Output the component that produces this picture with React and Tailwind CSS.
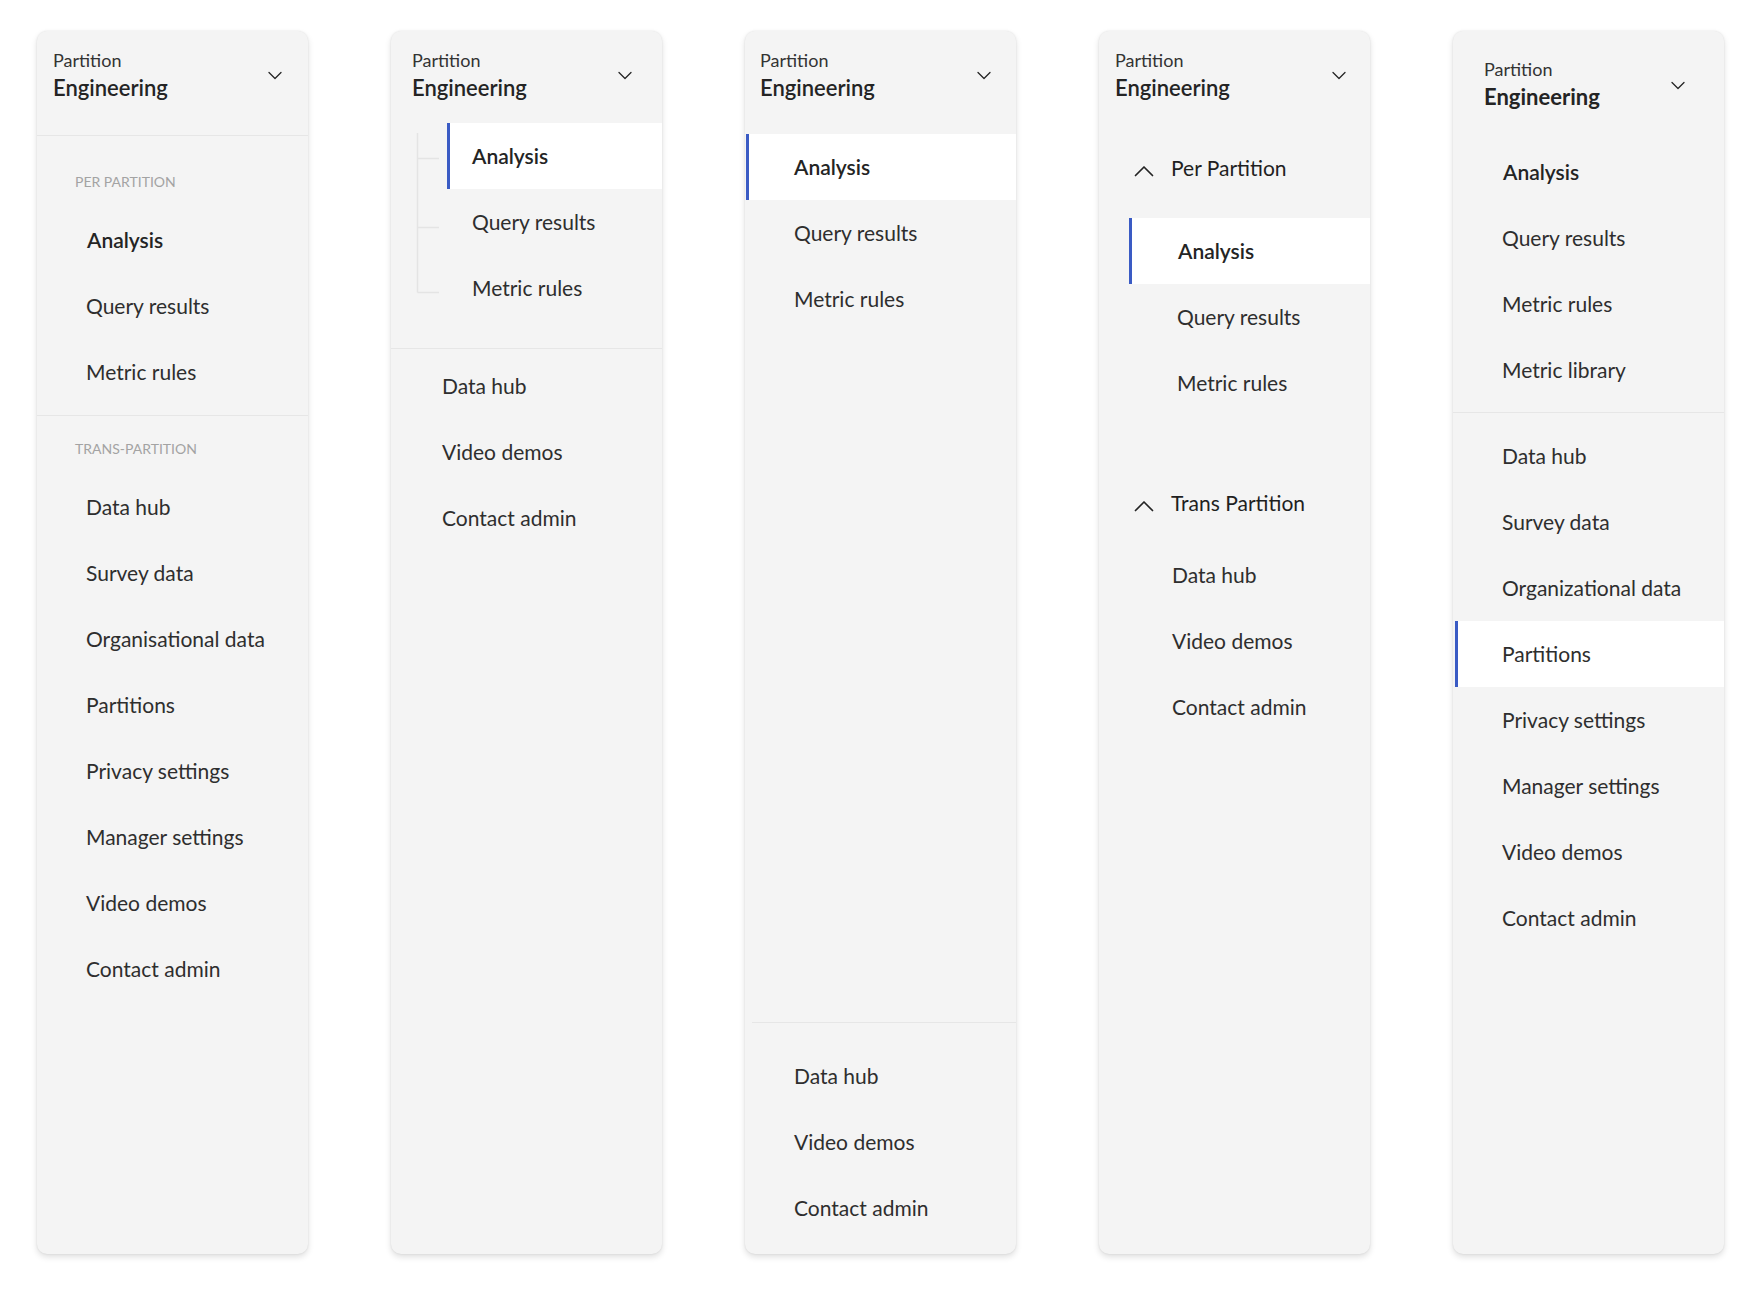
import React from "react";
import clsx from "clsx";

// chevron used in the partition picker
const ChevronDown = () => (
  <svg className="h-[16px] w-[16px]" viewBox="0 0 16 16" fill="none">
    <path d="M2 5.5L8 11.5L14 5.5" stroke="#242424" strokeWidth="1.3" strokeLinecap="round" strokeLinejoin="round" />
  </svg>
);

const ChevronUp = () => (
  <svg className="h-[12px] w-[20px]" viewBox="0 0 20 12" fill="none">
    <path d="M1.5 10.5L10 2L18.5 10.5" stroke="#242424" strokeWidth="1.7" strokeLinecap="round" strokeLinejoin="round" />
  </svg>
);

const Panel = ({ children }) => (
  <div className="flex h-[1223px] w-[271px] shrink-0 flex-col overflow-hidden rounded-[10px] bg-[#f4f4f4] shadow-[0_3px_6px_rgba(0,0,0,0.13),0_0_2px_rgba(0,0,0,0.1)]">
    {children}
  </div>
);

// header with "Partition / Engineering" and the dropdown chevron
const Header = ({ className, textClass, chevronClass, heavy }) => (
  <div className={clsx("flex shrink-0 justify-between", className)}>
    <div className={textClass}>
      <div className="text-[18px] leading-[22px] text-[#333333]">Partition</div>
      <div className={clsx("mt-[3px] text-[22px] leading-[28px] text-[#242424]", heavy ? "font-bold" : "font-semibold")}>
        Engineering
      </div>
    </div>
    <div className={chevronClass}>
      <ChevronDown />
    </div>
  </div>
);

const Row = ({ label, className, selected, bold }) => (
  <div
    className={clsx(
      "flex h-[66px] items-center text-[21px]",
      bold ? "font-semibold text-[#242424]" : "text-[#2e2e2e]",
      selected && "border-l-[3px] border-[#3a5bc4] bg-white",
      className
    )}
  >
    {label}
  </div>
);

const Label = ({ children, className }) => (
  <div className={clsx("pl-[38px] text-[14px] leading-[20px] text-[#a3a3a3]", className)}>{children}</div>
);

const Divider = ({ className }) => <div className={clsx("h-[1px] shrink-0 bg-[#e6e6e6]", className)} />;

const PanelOne = () => (
  <Panel>
    <Header className="h-[104px] pl-[16px] pr-[25px]" textClass="pt-[18px]" chevronClass="pt-[36px]" />
    <Divider />
    <Label className="mt-[36px]">PER PARTITION</Label>
    <div className="mt-[15px]">
      <Row label="Analysis" bold className="pl-[50px]" />
      <Row label="Query results" className="pl-[49px]" />
      <Row label="Metric rules" className="pl-[49px]" />
    </div>
    <Divider className="mt-[10px]" />
    <Label className="mt-[23px]">TRANS-PARTITION</Label>
    <div className="mt-[15px]">
      {["Data hub", "Survey data", "Organisational data", "Partitions", "Privacy settings", "Manager settings", "Video demos", "Contact admin"].map((item) => (
        <Row key={item} label={item} className="pl-[49px]" />
      ))}
    </div>
  </Panel>
);

const PanelTwo = () => (
  <Panel>
    <Header className="h-[92px] pl-[21px] pr-[29px]" textClass="pt-[18px]" chevronClass="pt-[36px]" />
    <div className="flex">
      {/* tree connector */}
      <svg className="h-[198px] w-[56px] shrink-0" viewBox="0 0 56 198" fill="none">
        <path d="M26.5 10V169.5M26.5 35.5H48M26.5 104.5H48M26.5 169.5H48" stroke="#e4e4e4" strokeWidth="1.5" />
      </svg>
      <div className="flex-1">
        <Row label="Analysis" selected bold className="pl-[22px]" />
        <Row label="Query results" className="pl-[25px]" />
        <Row label="Metric rules" className="pl-[25px]" />
      </div>
    </div>
    <Divider className="mt-[27px]" />
    <div className="mt-[4px]">
      {["Data hub", "Video demos", "Contact admin"].map((item) => (
        <Row key={item} label={item} className="pl-[51px]" />
      ))}
    </div>
  </Panel>
);

const PanelThree = () => (
  <Panel>
    <Header className="h-[103px] pl-[15px] pr-[24px]" textClass="pt-[18px]" chevronClass="pt-[36px]" />
    <div className="ml-[1px]">
      <Row label="Analysis" selected bold className="pl-[45px]" />
    </div>
    <Row label="Query results" className="pl-[49px]" />
    <Row label="Metric rules" className="pl-[49px]" />
    <div className="mt-auto pb-[13px]">
      <Divider className="ml-[7px]" />
      <div className="pt-[20px]">
        {["Data hub", "Video demos", "Contact admin"].map((item) => (
          <Row key={item} label={item} className="pl-[49px]" />
        ))}
      </div>
    </div>
  </Panel>
);

const Group = ({ title }) => (
  <div className="flex h-[66px] items-center text-[21px] text-[#1f1f1f]">
    <div className="flex w-[72px] justify-end pr-[17px] pt-[6px]">
      <ChevronUp />
    </div>
    {title}
  </div>
);

const PanelFour = () => (
  <Panel>
    <Header className="h-[104px] pl-[16px] pr-[23px]" textClass="pt-[18px]" chevronClass="pt-[36px]" />
    <Group title="Per Partition" />
    <div className="mt-[17px] pl-[30px]">
      <Row label="Analysis" selected bold className="pl-[46px]" />
      <Row label="Query results" className="pl-[48px]" />
      <Row label="Metric rules" className="pl-[48px]" />
    </div>
    <div className="mt-[54px]">
      <Group title="Trans Partition" />
    </div>
    <div className="mt-[6px]">
      {["Data hub", "Video demos", "Contact admin"].map((item) => (
        <Row key={item} label={item} className="pl-[73px]" />
      ))}
    </div>
  </Panel>
);

const PanelFive = () => (
  <Panel>
    <Header className="h-[108px] pl-[31px] pr-[38px]" textClass="pt-[27px]" chevronClass="pt-[46px]" heavy />
    <Row label="Analysis" bold className="pl-[50px]" />
    <Row label="Query results" className="pl-[49px]" />
    <Row label="Metric rules" className="pl-[49px]" />
    <Row label="Metric library" className="pl-[49px]" />
    <Divider className="mt-[9px]" />
    <div className="mt-[10px]">
      {["Data hub", "Survey data", "Organizational data", "Partitions", "Privacy settings", "Manager settings", "Video demos", "Contact admin"].map((item) =>
        item === "Partitions" ? (
          <div key={item} className="ml-[2px]">
            <Row label={item} selected className="pl-[44px]" />
          </div>
        ) : (
          <Row key={item} label={item} className="pl-[49px]" />
        )
      )}
    </div>
  </Panel>
);

export default function App() {
  return (
    <div className="flex min-h-[1289px] gap-[83px] bg-white pl-[37px] pt-[31px] font-['Lato',sans-serif] antialiased">
      <PanelOne />
      <PanelTwo />
      <PanelThree />
      <PanelFour />
      <PanelFive />
    </div>
  );
}
